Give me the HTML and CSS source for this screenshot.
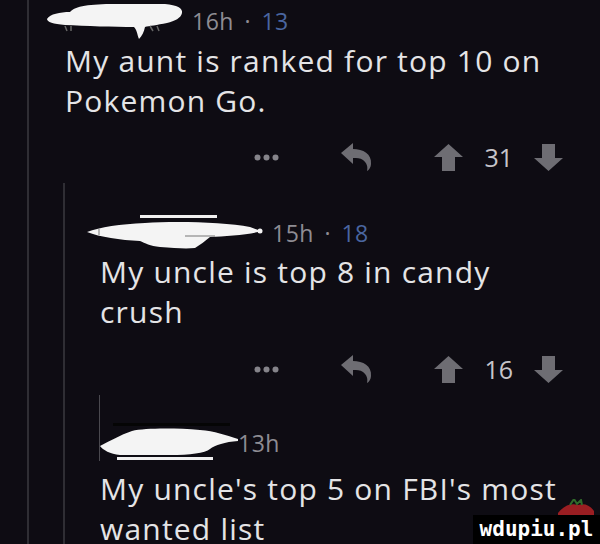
FILE: index.html
```html
<!DOCTYPE html>
<html lang="en">
<head>
<meta charset="utf-8">
<title>Comments</title>
<link rel="stylesheet" href="styles.css">
</head>
<body>
<div class="thread">
  <div class="c1">
    <div class="head h1">
      <svg class="scribble s1" width="140" height="38" viewBox="0 0 140 38">
        <path d="M2 17 C5 12 15 10 25 10 C30 4 45 2 70 2 L120 2 C132 3 138 6 137 11 C136 16 130 19 122 21 C112 23 104 24 100 25 C99 30 97 34 94 37 C92 32 92 28 89 25 C70 25 40 24 20 23 C8 22 2 20 2 17 Z" fill="#f4f4f4"/>
        <path d="M20 24 L22 29 M26 24 L26 29 M105 24 L108 29 M112 24 L114 29" stroke="#666" stroke-width="1.5"/>
      </svg>
      <span class="meta">16h <span class="sep">·</span> <span class="score">13</span></span>
    </div>
    <div class="body">My aunt is ranked for top 10 on Pokemon Go.</div>
    <div class="actions">
      <svg class="act-more" width="25" height="7" viewBox="0 0 25 7"><circle cx="3.5" cy="3.5" r="3"/><circle cx="12.5" cy="3.5" r="3"/><circle cx="21.5" cy="3.5" r="3"/></svg>
      <svg class="act-reply" width="32" height="28" viewBox="0 0 32 28"><path d="M0 10 L12 0 L12 6 C22 6 31 11 30 21 C30 24 28 27 26 28 C27 24 26 20 22 17 C19 15 16 15 12 15 L12 21 Z"/></svg>
      <div class="votes">
        <svg class="arrow" width="29" height="27" viewBox="0 0 29 27"><path d="M14.5 0 L29 13 L21 13 L21 27 L8 27 L8 13 L0 13 Z"/></svg>
        <span class="count">31</span>
        <svg class="arrow" width="29" height="27" viewBox="0 0 29 27"><path d="M14.5 27 L29 14 L21 14 L21 0 L8 0 L8 14 L0 14 Z"/></svg>
      </div>
    </div>

    <div class="c2">
      <div class="head h2">
        <svg class="scribble s2" width="180" height="42" viewBox="0 0 180 42">
          <rect x="55" y="3" width="77" height="3" fill="#f0f0f0"/>
          <path d="M2 20 C15 15 35 12 60 11 C90 9 140 10 165 15 L176 19 C165 23 140 24 125 25 C120 29 115 33 110 36 C100 37 90 36 75 35 C65 34 60 31 55 29 C35 28 15 25 2 20 Z" fill="#f4f4f4"/>
          <circle cx="175" cy="19" r="2.5" fill="#f4f4f4"/>
          <path d="M14 17 L14 23 M100 24 L130 24" stroke="#777" stroke-width="1"/>
        </svg>
        <span class="meta">15h <span class="sep">·</span> <span class="score">18</span></span>
      </div>
      <div class="body">My uncle is top 8 in candy crush</div>
      <div class="actions">
        <svg class="act-more" width="25" height="7" viewBox="0 0 25 7"><circle cx="3.5" cy="3.5" r="3"/><circle cx="12.5" cy="3.5" r="3"/><circle cx="21.5" cy="3.5" r="3"/></svg>
        <svg class="act-reply" width="32" height="28" viewBox="0 0 32 28"><path d="M0 10 L12 0 L12 6 C22 6 31 11 30 21 C30 24 28 27 26 28 C27 24 26 20 22 17 C19 15 16 15 12 15 L12 21 Z"/></svg>
        <div class="votes">
          <svg class="arrow" width="29" height="27" viewBox="0 0 29 27"><path d="M14.5 0 L29 13 L21 13 L21 27 L8 27 L8 13 L0 13 Z"/></svg>
          <span class="count">16</span>
          <svg class="arrow" width="29" height="27" viewBox="0 0 29 27"><path d="M14.5 27 L29 14 L21 14 L21 0 L8 0 L8 14 L0 14 Z"/></svg>
        </div>
      </div>

      <div class="c3">
        <div class="c3-head">
          <div class="head h3">
            <svg class="scribble s3" width="138" height="42" viewBox="0 0 138 42">
              <rect x="13" y="1" width="117" height="3" fill="#050505"/>
              <path d="M0 24 C10 19 20 13 32 9 C45 6 75 6 100 8 C115 9 125 13 138 17 L138 19 C125 20 115 23 110 27 C105 31 90 33 70 33 L20 33 C10 32 3 28 0 24 Z" fill="#f4f4f4"/>
              <rect x="17" y="35" width="96" height="3" fill="#f0f0f0"/>
            </svg>
            <span class="meta">13h</span>
          </div>
        </div>
        <div class="body">My uncle's top 5 on FBI's most wanted list</div>
      </div>
    </div>
  </div>
</div>

<div class="watermark">
  <svg class="fruit" width="40" height="16" viewBox="0 0 40 16">
    <path d="M2 14 C8 6 16 4 22 6 C28 4 34 6 38 12 L38 16 L2 16 Z" fill="#9a1e22"/>
    <path d="M14 6 L18 0 L21 5 L25 1 L26 6" stroke="#2f6a2a" stroke-width="2" fill="none"/>
  </svg>
  <span class="wm-text">wdupiu.pl</span>
</div>
</body>
</html>
```

FILE: styles.css
```css
html, body {
  margin: 0;
  padding: 0;
}

body {
  width: 600px;
  height: 544px;
  overflow: hidden;
  background: #0e0c13;
  color: #e4e4e6;
  font-family: "Open Sans", "Noto Sans", sans-serif;
  position: relative;
}

.thread {
  padding-left: 27px;
}

.c1 {
  box-sizing: border-box;
  border-left: 2px solid #2f2e34;
  padding-left: 36px;
  height: 544px;
  overflow: hidden;
}

.head {
  display: flex;
  align-items: center;
}

.h1 {
  height: 41px;
}

.s1 {
  margin-left: -20px;
  margin-right: 7px;
}

.meta {
  font-size: 23px;
  color: #8e8d93;
  letter-spacing: 0.5px;
}

.sep {
  margin: 0 4px;
}

.score {
  color: #4a66a0;
}

.body {
  font-size: 30px;
  line-height: 40px;
  letter-spacing: 1.2px;
  max-width: 485px;
}

.c2 > .body {
  max-width: 455px;
}

.actions {
  display: flex;
  align-items: center;
  justify-content: flex-end;
  height: 36px;
  margin-top: 18px;
  padding-right: 37px;
  fill: #6e6d73;
}

.act-more {
  fill: #85848a;
  margin-right: 62px;
}

.act-reply {
  margin-right: 61px;
}

.votes {
  display: flex;
  align-items: center;
  gap: 21px;
}

.count {
  font-size: 25px;
  color: #c6c5ca;
  line-height: 1;
}

.c2 {
  box-sizing: border-box;
  margin-top: 8px;
  margin-left: -2px;
  border-left: 2px solid #2f2e34;
  padding-left: 35px;
  padding-top: 30px;
  height: 361px;
}

.h2 {
  height: 39px;
}

.s2 {
  margin-left: -15px;
  margin-right: 7px;
}

.c2 .actions {
  margin-top: 19px;
}

.c3 {
  margin-top: 8px;
}

.c3-head {
  margin-left: -1px;
  border-left: 1px solid #4a494f;
  padding-top: 30px;
}

.h3 {
  height: 36px;
}

.c3 .body {
  margin-top: 8px;
}

.watermark {
  position: absolute;
  right: 0;
  bottom: 0;
  width: 127px;
  height: 29px;
  background: #000;
  display: flex;
  align-items: center;
  justify-content: center;
}

.fruit {
  position: absolute;
  right: 4px;
  bottom: 29px;
}

.wm-text {
  font-family: "DejaVu Sans Mono", monospace;
  font-weight: bold;
  font-size: 21px;
  color: #fff;
  line-height: 1;
}
```
